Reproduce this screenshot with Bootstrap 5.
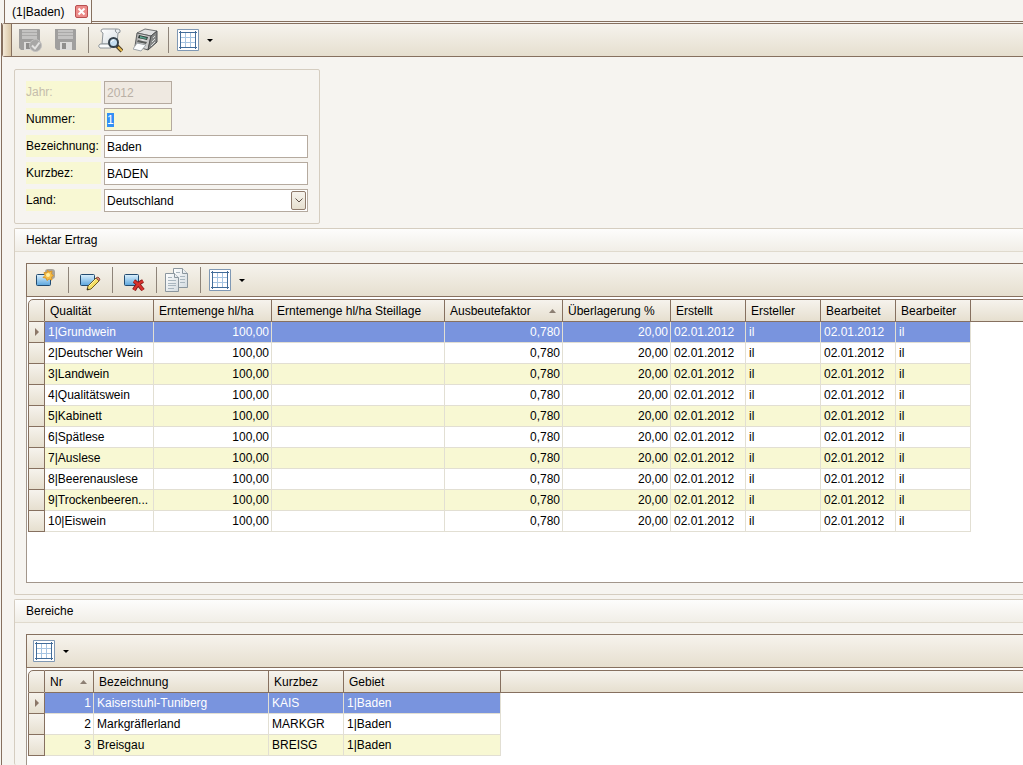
<!DOCTYPE html>
<html lang="de">
<head>
<meta charset="utf-8">
<meta name="viewport" content="width=device-width, initial-scale=1">
<title>(1|Baden)</title>
<link rel="stylesheet" href="https://cdn.jsdelivr.net/npm/bootstrap@5.3.0/dist/css/bootstrap.min.css">
<style>
:root { --line: #86705f; --soft: #d5cdc0; --bg: #f6f4f0; --yellow: #f8f8d3; --chrome: linear-gradient(#f6f3ed, #e6dfcf); }
body { background: var(--bg); color: #000; font: 12px/20px "Liberation Sans", Arial, sans-serif; }
.tab-row { height: 23px; padding-left: 4px; }
.doc-tab { height: 23px; width: 88px; padding: 0 3px 0 7px; border: 1px solid var(--line); border-width: 0 1px 0 1px; background: #f9f7f4; }
.tab-line { height: 22px; border-bottom: 1px solid var(--line); }
.plain-btn { border: 0; padding: 0; background: none; line-height: 0; }
.page-body { border-left: 1px solid var(--line); margin-left: 1px; }
.tools { height: 34px; border: 1px solid var(--line); border-right: 0; background: var(--chrome); padding-left: 1px; }
.tools-main { padding-left: 0; border-radius: 3px 0 0 3px; }
.grip { width: 9px; border-right: 1px solid var(--line); background: linear-gradient(90deg, #f4ead8, #d8c5a4); }
.tool-btn { width: 36px; display: flex; align-items: center; justify-content: center; }
.tool-drop { display: flex; align-items: center; gap: 8px; padding-left: 5px; }
.tool-sep { width: 1px; margin: 3px 3px 3px 4px; background: #8e8479; }
.content-area { padding: 12px 0 0 12px; gap: 4px; }
.panel { border: 1px solid var(--soft); border-radius: 2px 0 0 2px; border-right: 0; }
.form-panel { width: 306px; padding: 11px; border: 1px solid var(--soft); border-radius: 2px; display: grid; gap: 4px; }
.form-line { display: grid; grid-template-columns: 75px 1fr; column-gap: 3px; height: 23px; }
.form-line label { background: var(--yellow); line-height: 23px; height: 22px; white-space: nowrap; }
.field { width: 100%; height: 23px; border: 1px solid #b5aa9f; border-radius: 0; padding: 0 2px; background: #fff; color: #000; outline: 0; appearance: none; }
.field-short { width: 68px; }
.field-key { background: var(--yellow); }
.field:disabled { background: #efe9e1; color: #b9b0a6; opacity: 1; }
.label-off { color: #c5bdac; }
.field::selection { background: #3390f5; color: #fff; }
.drop-mark { right: 2px; top: 2px; width: 15px; height: 19px; border: 1px solid #8f7b6c; border-radius: 2px; background: var(--chrome); pointer-events: none; }
.panel-title { height: 23px; margin: 0; padding-left: 11px; font-size: 12px; line-height: 23px; font-weight: 400; border-bottom: 1px solid #e0dacd; background: linear-gradient(#fdfdfc, #f1eee7); }
.panel-inner { padding: 11px 0 11px 11px; }
.grid-box { background: #fff; border: 1px solid #a2968b; border-width: 0 0 1px 1px; padding: 2px 0 0 1px; }
.grid-tall { min-height: 286px; }
.data-grid { table-layout: fixed; width: 100%; border-collapse: separate; border-spacing: 0; }
.data-grid th { height: 23px; padding: 0 5px; border: 1px solid var(--line); border-width: 1px 1px 1px 0; background: var(--chrome); font-weight: 400; white-space: nowrap; }
.data-grid th:last-child { border-right: 0; }
.data-grid th:first-child { border-left-width: 1px; border-top-left-radius: 5px; }
.data-grid td { height: 21px; padding: 0 2px 0 3px; border: 1px solid #e2dfd3; border-width: 0 1px 1px 0; overflow: hidden; white-space: nowrap; line-height: 20px; }
.data-grid tr.alt td { background: var(--yellow); }
.data-grid tr.picked td { background: #7994de; color: #fff; }
.data-grid tbody tr td:first-child { background: var(--chrome); border-color: var(--line); border-left: 1px solid var(--line); padding: 0; text-align: center; line-height: 0; }
.data-grid tbody tr td:last-child { background: #fff; border: 0; }
.sort-mark { margin-top: 8px; margin-right: 1px; }
.w17 { width: 17px } .w49 { width: 49px } .w75 { width: 75px } .w108 { width: 108px } .w109 { width: 109px } .w118 { width: 118px } .w157 { width: 157px } .w173 { width: 173px } .w175 { width: 175px }
</style>
<script src="https://cdn.jsdelivr.net/npm/bootstrap@5.3.0/dist/js/bootstrap.bundle.min.js"></script>
</head>
<body class="d-flex flex-column min-vh-100 overflow-x-hidden">
<svg class="position-absolute" width="0" height="0" aria-hidden="true">
  <defs>
    <linearGradient id="blue" x1="0" y1="0" x2="0" y2="1"><stop offset="0" stop-color="#dff2fd"/><stop offset="1" stop-color="#5aa5dd"/></linearGradient>
    <linearGradient id="paper" x1="0" y1="0" x2="1" y2="1"><stop offset="0" stop-color="#fff"/><stop offset="1" stop-color="#d3dbe0"/></linearGradient>
    <linearGradient id="metal" x1="0" y1="0" x2="1" y2="0"><stop offset="0" stop-color="#999"/><stop offset=".5" stop-color="#e4e4e4"/><stop offset="1" stop-color="#b5b5b5"/></linearGradient>
  </defs>
  <symbol id="i-grid" viewBox="0 0 22 22"><path fill="#fff" stroke="#7f98b4" d="M.5.5h21v21H.5z"/><path fill="none" stroke="#a6c4e1" d="M8.500 3v16M13.500 3v16M3 8.500h16M3 13.500h16"/><path fill="none" stroke="#426c99" d="M3.500 2v18M18.500 2v18M2 3.500h18M2 18.500h18"/></symbol>
  <symbol id="i-card" viewBox="0 0 24 24"><rect x="2.500" y="7.500" width="14" height="11" rx="1" fill="url(#blue)" stroke="#234b70"/></symbol>
  <symbol id="i-disk" viewBox="0 0 24 24"><path fill="#a09f9e" d="M1 1h20q1 0 1 1v20H3l-2-2z"/><path fill="#c4c3c2" d="M4 2h15v9H4z"/><path stroke="#aaa9a8" d="M4 4.500h15M4 7.500h15"/><path fill="#dddcdb" d="M6 14h12v8H6z"/><path fill="#8f8e8d" d="M8 15h4v6H8z"/></symbol>
  <symbol id="i-down" viewBox="0 0 6 3"><path d="M0 0h6L3 3z"/></symbol>
</svg>

<div class="tab-row d-flex">
  <div class="doc-tab d-flex align-items-center justify-content-between">
    <span>(1|Baden)</span>
    <button class="plain-btn" type="button" aria-label="Schließen"><svg width="13" height="13" viewBox="0 0 13 13"><rect x=".5" y=".5" width="12" height="12" rx="1.500" fill="#ec8b89" stroke="#b94f50"/><path d="M3.500 3.500l6 6m0-6l-6 6" stroke="#fff" stroke-width="2"/></svg></button>
  </div>
  <div class="tab-line flex-fill"></div>
</div>

<div class="page-body flex-fill d-flex flex-column">
  <div class="tools tools-main d-flex" role="toolbar" aria-label="Datensatz">
    <span class="grip"></span>
    <button class="plain-btn tool-btn" type="button" aria-label="Speichern und schließen"><svg width="24" height="24" viewBox="0 0 24 24"><use href="#i-disk"/><circle cx="17.500" cy="17.500" r="6" fill="#a8a7a6" stroke="#c2c1c0"/><path d="M14 17.500l3 3 4.500-6" fill="none" stroke="#e3e2e1" stroke-width="2"/></svg></button>
    <button class="plain-btn tool-btn" type="button" aria-label="Speichern"><svg width="24" height="24"><use href="#i-disk"/></svg></button>
    <span class="tool-sep"></span>
    <button class="plain-btn tool-btn" type="button" aria-label="Vorschau"><svg width="26" height="26" viewBox="0 0 26 26"><path d="M6 2q-2 0-2 2 0 1 2 2l-1 11h15l1-11q3 0 2-3-1-1-3-1z" fill="url(#paper)" stroke="#8d9499"/><path d="M19 2q-2 2 1 4" fill="none" stroke="#8d9499"/><path d="M3 17h11q-2 2 0 4H3q-3-2 0-4z" fill="#fbfcfc" stroke="#8d9499"/><path d="M20 19l5 5" stroke="#4d3d24" stroke-width="4"/><path d="M21 20l4 4" stroke="#e6b94c" stroke-width="2"/><circle cx="16.500" cy="15.500" r="4.500" fill="#c5def0" stroke="#34414b" stroke-width="2"/><path d="M14 15q1-2 3-2" fill="none" stroke="#fff"/></svg></button>
    <button class="plain-btn tool-btn" type="button" aria-label="Drucken"><svg width="26" height="26" viewBox="0 0 26 26"><path d="M4 6l8-4 12 2-6 5z" fill="#e0e1e1" stroke="#707273"/><path d="M4 6l14 3-3 14L2 19z" fill="url(#metal)" stroke="#5e6061"/><path d="M18 9l6-5v11l-9 8z" fill="#868887" stroke="#4b4d4e"/><path d="M6 8l9 2-1 3-9-2z" fill="#303d3a"/><path d="M7 9l7 2-1 1-6-1z" fill="#56a28b"/><path d="M5 13l9 2-1 2-9-2z" fill="#5a5d5c"/><path d="M4 16l9 2-5 6-8-2z" fill="#fbfcfd" stroke="#9da3a7"/><path d="M20 11l2-2M19 15l3-3M18 19l4-4" stroke="#d8dada"/></svg></button>
    <span class="tool-sep"></span>
    <button class="plain-btn tool-drop" type="button" aria-label="Ansicht"><svg width="22" height="22"><use href="#i-grid"/></svg><svg width="6" height="3"><use href="#i-down"/></svg></button>
  </div>

  <main class="content-area flex-fill d-flex flex-column">
    <form class="form-panel">
      <div class="form-line"><label class="label-off" for="jahr">Jahr:</label><input class="field field-short" id="jahr" value="2012" disabled></div>
      <div class="form-line"><label for="nummer">Nummer:</label><input class="field field-short field-key" id="nummer" value="1"></div>
      <div class="form-line"><label for="bez">Bezeichnung:</label><input class="field" id="bez" value="Baden"></div>
      <div class="form-line"><label for="kurz">Kurzbez:</label><input class="field" id="kurz" value="BADEN"></div>
      <div class="form-line"><label for="land">Land:</label>
        <div class="position-relative"><select class="field" id="land"><option>Deutschland</option></select>
          <span class="drop-mark position-absolute d-flex align-items-center justify-content-center"><svg width="8" height="5" viewBox="0 0 8 5"><path d="M.5.5L4 4 7.500.5" fill="none" stroke="#5e5048"/></svg></span></div>
      </div>
    </form>

    <section class="panel">
      <h2 class="panel-title">Hektar Ertrag</h2>
      <div class="panel-inner">
        <div class="tools d-flex" role="toolbar" aria-label="Hektar Ertrag">
          <button class="plain-btn tool-btn" type="button" aria-label="Neu"><svg width="24" height="24" viewBox="0 0 24 24"><use href="#i-card" transform="translate(0 -1)"/><rect x="11" y="1" width="10" height="10" rx="3" fill="#8f8a80" opacity=".75"/><path d="M13.500 2l1.500 2 3-1-.5 3 2 1.500-2 1.500.5 3-3-1-2 1.500-1-2.500-3-.5 2-2-1-3 3 .5z" fill="#f6bd45" stroke="#d9982b"/><circle cx="14" cy="7" r="2" fill="#fff0a5"/></svg></button>
          <span class="tool-sep"></span>
          <button class="plain-btn tool-btn" type="button" aria-label="Bearbeiten"><svg width="24" height="24" viewBox="0 0 24 24"><use href="#i-card" transform="translate(0 -1)"/><path d="M9 22l1-4 8-8 3 3-8 8z" fill="#f5df64" stroke="#6e5b1e"/><path d="M11 18l7-7" stroke="#fff7bc"/><path d="M18 10l2-1 2 2-1 2z" fill="#df8470" stroke="#8d5442"/><path d="M9 22l.5-2 1.500 1.500z" fill="#222"/></svg></button>
          <span class="tool-sep"></span>
          <button class="plain-btn tool-btn" type="button" aria-label="Löschen"><svg width="24" height="24" viewBox="0 0 24 24"><use href="#i-card" transform="translate(0 -1)"/><path d="M12 13q5 3 9 9M21 13q-6 3-9 9" fill="none" stroke="#7e1717" stroke-width="4"/><path d="M12 13q5 3 9 9M21 13q-6 3-9 9" fill="none" stroke="#d7322d" stroke-width="2.500"/></svg></button>
          <span class="tool-sep"></span>
          <button class="plain-btn tool-btn" type="button" aria-label="Kopieren"><svg width="26" height="26" viewBox="0 0 26 26"><g fill="url(#paper)" stroke="#8b969e"><path d="M8.500 1.500h9l5 5v14h-14z"/><path d="M17.500 1.500v5h5"/><path d="M.5 6.500h9l4 4v14H.5z"/><path d="M9.500 6.500v4h4"/></g><path d="M3 10.500h4M3 13.500h8M3 16.500h8M3 18.500h8M3 21.500h6M11 5.500h4M15 9.500h5M15 12.500h5M15 15.500h5" stroke="#a9b6bf"/></svg></button>
          <span class="tool-sep"></span>
          <button class="plain-btn tool-drop" type="button" aria-label="Ansicht"><svg width="22" height="22"><use href="#i-grid"/></svg><svg width="6" height="3"><use href="#i-down"/></svg></button>
        </div>
        <div class="grid-box grid-tall">
          <table class="data-grid">
            <thead><tr><th class="w17"></th><th class="w109">Qualität</th><th class="w118">Erntemenge hl/ha</th><th class="w173">Erntemenge hl/ha Steillage</th>
              <th class="w118"><div class="d-flex justify-content-between">Ausbeutefaktor<svg class="sort-mark" width="7" height="4" viewBox="0 0 7 4"><path d="M0 4h7L3.500 0z" fill="#8c7f73"/></svg></div></th>
              <th class="w108">Überlagerung %</th><th class="w75">Erstellt</th><th class="w75">Ersteller</th><th class="w75">Bearbeitet</th><th class="w75">Bearbeiter</th><th></th></tr></thead>
            <tbody id="ertrag"></tbody>
          </table>
        </div>
      </div>
    </section>

    <section class="panel border-bottom-0 flex-fill d-flex flex-column">
      <h2 class="panel-title">Bereiche</h2>
      <div class="panel-inner pb-0 flex-fill d-flex flex-column">
        <div class="tools d-flex" role="toolbar" aria-label="Bereiche">
          <button class="plain-btn tool-drop" type="button" aria-label="Ansicht"><svg width="22" height="22"><use href="#i-grid"/></svg><svg width="6" height="3"><use href="#i-down"/></svg></button>
        </div>
        <div class="grid-box border-bottom-0 flex-fill">
          <table class="data-grid">
            <thead><tr><th class="w17"></th><th class="w49"><div class="d-flex justify-content-between">Nr<svg class="sort-mark" width="7" height="4" viewBox="0 0 7 4"><path d="M0 4h7L3.500 0z" fill="#8c7f73"/></svg></div></th>
              <th class="w175">Bezeichnung</th><th class="w75">Kurzbez</th><th class="w157">Gebiet</th><th></th></tr></thead>
            <tbody id="bereiche"></tbody>
          </table>
        </div>
      </div>
    </section>
  </main>
</div>
<script>
const marker = '<svg width="4" height="8" viewBox="0 0 4 8"><path d="M0 0v8l4-4z" fill="#8c7768"/></svg>';
function fill(id, rows, numeric) {
  document.getElementById(id).innerHTML = rows.map((row, i) =>
    `<tr class="${i === 0 ? 'picked' : i % 2 === 0 ? 'alt' : ''}"><td>${i === 0 ? marker : ''}</td>` +
    row.map((v, c) => `<td${numeric.includes(c) ? ' class="text-end"' : ''}>${v}</td>`).join('') + '<td></td></tr>').join('');
}
const wines = ['Grundwein', 'Deutscher Wein', 'Landwein', 'Qualitätswein', 'Kabinett', 'Spätlese', 'Auslese', 'Beerenauslese', 'Trockenbeeren...', 'Eiswein'];
fill('ertrag', wines.map((w, i) => [`${i + 1}|${w}`, '100,00', '', '0,780', '20,00', '02.01.2012', 'il', '02.01.2012', 'il']), [1, 3, 4]);
fill('bereiche', [['1', 'Kaiserstuhl-Tuniberg', 'KAIS', '1|Baden'], ['2', 'Markgräflerland', 'MARKGR', '1|Baden'], ['3', 'Breisgau', 'BREISG', '1|Baden']], [0]);
document.getElementById('nummer').select();
</script>
</body>
</html>
